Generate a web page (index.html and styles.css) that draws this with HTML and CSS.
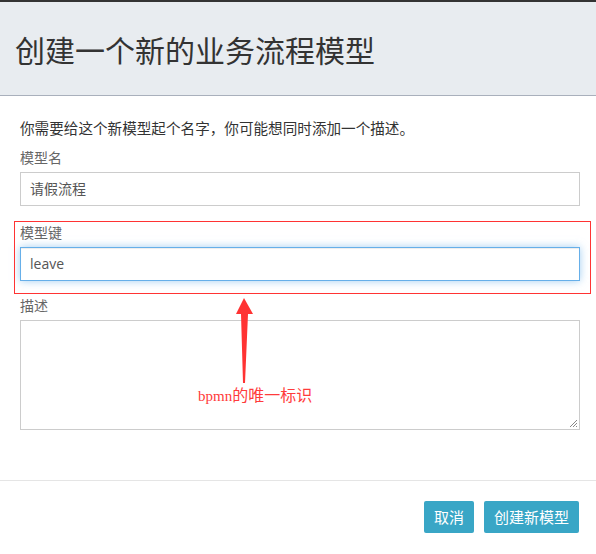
FILE: index.html
```html
<!DOCTYPE html>
<html lang="zh">
<head>
<meta charset="utf-8">
<link rel="stylesheet" href="styles.css">
</head>
<body>
<div class="modal">
  <div class="modal-header">
    <h1 class="title">创建一个新的业务流程模型</h1>
  </div>
  <div class="modal-body">
    <p class="intro">你需要给这个新模型起个名字，你可能想同时添加一个描述。</p>
    <div class="group">
      <label class="label">模型名</label>
      <div class="input">请假流程</div>
    </div>
    <div class="group key">
      <label class="label">模型键</label>
      <div class="input focused">leave</div>
    </div>
    <div class="group last">
      <label class="label">描述</label>
      <div class="textarea">
        <svg class="grip" width="9" height="9" viewBox="0 0 9 9"><path d="M8 1 L1 8 M8 4 L4 8 M8 7 L7 8" stroke="#888" stroke-width="1" fill="none"/></svg>
      </div>
    </div>
    <div class="highlight"></div>
    <svg class="arrow" width="20" height="90" viewBox="0 0 20 90"><polygon points="9,0 18,16 13,16 10,85 8,85 6,16 1,16" fill="#ff3333"/></svg>
    <div class="note"><span class="latin">bpmn</span>的唯一标识</div>
  </div>
  <div class="modal-footer">
    <button class="btn">取消</button>
    <button class="btn">创建新模型</button>
  </div>
</div>
</body>
</html>
```
FILE: styles.css
```css
* { box-sizing: border-box; }
html, body { margin: 0; padding: 0; background: #fff; }
body {
  font-family: "Noto Sans CJK SC", "Open Sans", sans-serif;
  color: #333;
  width: 596px;
  height: 554px;
  overflow: hidden;
}
.modal { border-top: 2px solid #333; }
.modal-header {
  background: #e8ecf0;
  height: 94px;
  border-bottom: 1px solid #a9b0bc;
  display: flex;
  align-items: center;
  padding: 0 15px;
}
.title {
  margin: 0;
  font-size: 30px;
  font-weight: 400;
  line-height: 40px;
  color: #333;
}
.modal-body {
  position: relative;
  padding: 22px 16px 0 20px;
  height: 384px;
}
.intro {
  margin: 0 0 9px;
  font-size: 14.6px;
  line-height: 20px;
  color: #333;
}
.group { display: flex; flex-direction: column; margin-bottom: 16px; }
.group.key { margin-bottom: 14px; }
.group.last { margin-bottom: 0; }
.label {
  font-size: 14px;
  line-height: 20px;
  color: #666;
  margin-bottom: 5px;
}
.group.last .label { margin-bottom: 5px; }
.input {
  height: 34px;
  border: 1px solid #ccc;
  padding: 0 9px;
  font-size: 14px;
  line-height: 32px;
  color: #555;
  font-family: "Open Sans", "Noto Sans CJK SC", sans-serif;
}
.input.focused {
  border-color: #66afe9;
  box-shadow: inset 0 1px 1px rgba(0,0,0,.075), 0 0 8px rgba(102,175,233,.6);
}
.textarea {
  height: 110px;
  border: 1px solid #ccc;
  position: relative;
}
.grip { position: absolute; right: 1px; bottom: 1px; }
.highlight {
  position: absolute;
  left: 14px;
  top: 125px;
  width: 577px;
  height: 73px;
  border: 1px solid #ff3333;
}
.arrow { position: absolute; left: 235px; top: 202px; }
.note {
  position: absolute;
  left: 198px;
  top: 288px;
  font-size: 16px;
  line-height: 20px;
  color: #ff3b3b;
}
.latin { font-family: "Liberation Serif", serif; font-size: 15px; }
.modal-footer {
  border-top: 1px solid #e5e5e5;
  display: flex;
  justify-content: flex-end;
  gap: 10px;
  padding: 20px 17px 0 0;
}
.btn {
  height: 32px;
  border: 0;
  border-radius: 2px;
  background: #39a6c6;
  color: #fff;
  font-family: "Noto Sans CJK SC", sans-serif;
  font-size: 15px;
  padding: 0 10px;
  line-height: 32px;
}
```
